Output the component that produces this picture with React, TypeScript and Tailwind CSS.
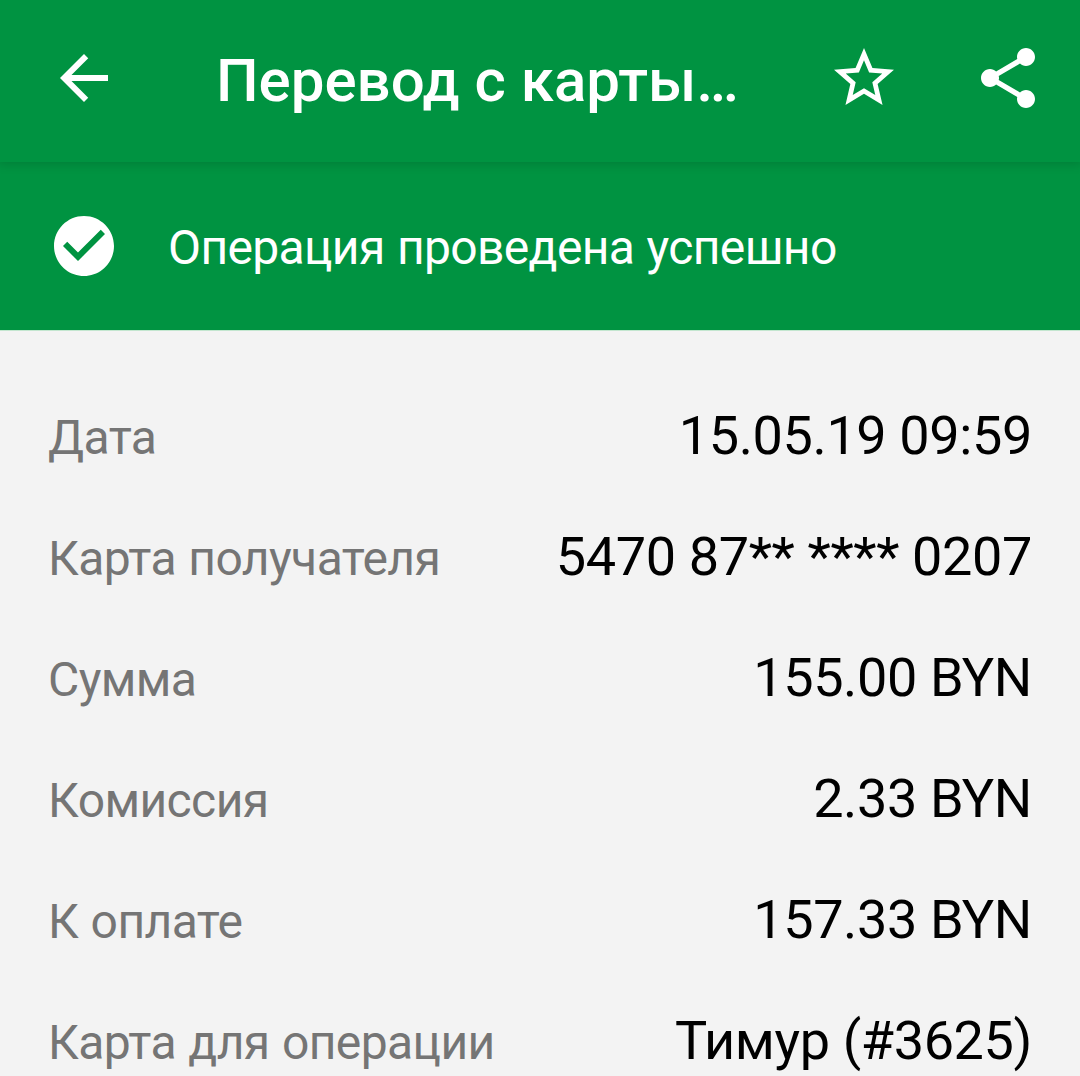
const details = [
  { label: 'Дата', value: '15.05.19 09:59' },
  { label: 'Карта получателя', value: '5470 87** **** 0207' },
  { label: 'Сумма', value: '155.00 BYN' },
  { label: 'Комиссия', value: '2.33 BYN' },
  { label: 'К оплате', value: '157.33 BYN' },
  { label: 'Карта для операции', value: 'Тимур (#3625)' },
];

const Icon = ({ d }: { d: string }) => (
  <svg viewBox="0 0 24 24" className="size-[72px] shrink-0 fill-white">
    <path d={d} />
  </svg>
);

const Header = () => (
  <header className="relative z-10 flex h-[162px] items-center bg-[#009341] pr-9 pl-12 shadow-[0_0_10px_2px_rgba(0,0,0,0.15)]">
    <button type="button" className="mb-1.5">
      <Icon d="M20 11H7.83l5.59-5.59L12 4l-8 8 8 8 1.41-1.41L7.83 13H20v-2z" />
    </button>
    <h1 className="ml-24 flex-1 whitespace-nowrap text-[60px] leading-[72px] font-medium">
      Перевод с карты…
    </h1>
    <div className="mb-1.5 flex gap-[72px]">
      <button type="button">
        <Icon d="M12 15.39l-3.76 2.27.99-4.28-3.32-2.88 4.38-.37L12 6.09l1.71 4.04 4.38.37-3.32 2.88.99 4.28M22 9.24l-7.19-.61L12 2 9.19 8.63 2 9.24l5.45 4.73L5.82 21 12 17.27 18.18 21l-1.64-7.03L22 9.24z" />
      </button>
      <button type="button">
        <Icon d="M18 16c-.8 0-1.5.3-2 .8l-7.1-4.1c.1-.2.1-.5.1-.7s0-.5-.1-.7L16 7.2c.5.5 1.2.8 2 .8 1.66 0 3-1.34 3-3s-1.34-3-3-3-3 1.34-3 3c0 .24.04.47.09.7L8.04 9.81C7.5 9.31 6.79 9 6 9c-1.66 0-3 1.34-3 3s1.34 3 3 3c.79 0 1.5-.31 2.04-.81l7.05 4.11c-.06.23-.09.46-.09.7 0 1.66 1.34 3 3 3s3-1.34 3-3-1.34-3-3-3z" />
      </button>
    </div>
  </header>
);

const App = () => {
  return (
    <div className="h-[1076px] w-[1080px] overflow-hidden bg-[#f3f3f3] font-['Roboto',sans-serif] text-white">
      <Header />

      <div className="flex h-[169px] items-center border-b border-[#c3e6cf] bg-[#009341] pl-12">
        <Icon d="M12 2C6.48 2 2 6.48 2 12s4.48 10 10 10 10-4.48 10-10S17.52 2 12 2zm-2 15l-5-5 1.41-1.41L10 14.17l7.59-7.59L19 8l-9 9z" />
        <p className="mt-1 ml-12 whitespace-nowrap text-[48px] leading-[56px] tracking-[-0.64px] [word-spacing:1px]">
          Операция проведена успешно
        </p>
      </div>

      <dl className="px-12 pt-11">
        {details.map(({ label, value }) => (
          <div key={label} className="flex h-[121px] items-baseline justify-between whitespace-nowrap">
            <dt className="text-[48px] leading-none tracking-[-0.58px] text-[#757575] [word-spacing:1px]">
              {label}
            </dt>
            <dd className="text-[54px] leading-[121px] tracking-[-0.37px] text-black">{value}</dd>
          </div>
        ))}
      </dl>
    </div>
  );
};

export default App;
